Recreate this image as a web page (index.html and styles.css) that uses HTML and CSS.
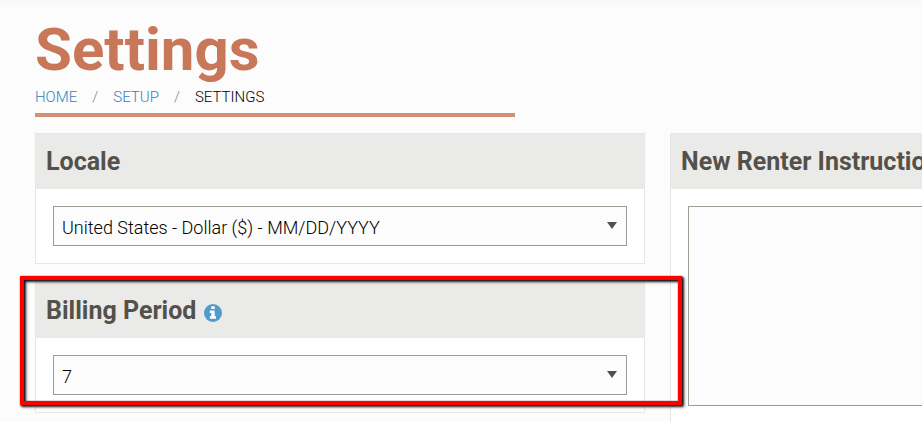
FILE: index.html
```html
<!DOCTYPE html>
<html lang="en">
  <head>
    <meta charset="UTF-8" />
    <meta name="viewport" content="width=device-width, initial-scale=1.0" />
    <title>Settings</title>
    <link rel="stylesheet" href="styles.css">
  </head>
  <body>
    <header class="page-header">
      <h1>Settings</h1>
      <nav class="breadcrumbs" aria-label="Breadcrumb">
        <a href="#">Home</a>
        <span class="separator">/</span>
        <a href="#">Setup</a>
        <span class="separator">/</span>
        <span>Settings</span>
      </nav>
    </header>

    <main class="columns">
      <div class="column">
        <section class="card">
          <h2><label for="locale">Locale</label></h2>
          <div class="card-body">
            <div class="select-wrap">
              <select id="locale">
                <option>United States - Dollar ($) - MM/DD/YYYY</option>
              </select>
            </div>
          </div>
        </section>

        <section class="card highlighted">
          <h2>
            <label for="billing-period">Billing Period</label>
            <svg class="info-icon" viewBox="0 0 18 18" role="img" aria-label="Info">
              <circle cx="9" cy="9" r="9" />
              <path d="M7.3 2.2h3.4v2.7H7.3zM5.8 6.5h4.9v5.8H12v2.4H5.8v-2.4h1.5V8.9H5.8z" />
            </svg>
          </h2>
          <div class="card-body">
            <div class="select-wrap">
              <select id="billing-period">
                <option>7</option>
              </select>
            </div>
          </div>
        </section>
      </div>

      <div class="column">
        <section class="card tall">
          <h2><label for="instructions">New Renter Instructions</label></h2>
          <div class="card-body">
            <textarea id="instructions"></textarea>
          </div>
        </section>
      </div>
    </main>
  </body>
</html>
```

FILE: styles.css
```css
* {
  box-sizing: border-box;
}

body {
  font-family: Roboto, "Liberation Sans", sans-serif;
  background: #fcfcfc linear-gradient(#f7f9f8, #fcfcfc 10px) no-repeat;
  color: #000;
  margin: 0;
  padding: 20px 35px 0;
  overflow: hidden;
}

.page-header {
  max-width: 480px;
  border-bottom: 4px solid #d38f77;
  margin-bottom: 16px;
}

h1 {
  margin: 0;
  font-size: 60px;
  line-height: 60px;
  font-weight: bold;
  color: #c87858;
}

.breadcrumbs {
  display: flex;
  gap: 15px;
  padding: 7px 0 6px;
  font-size: 15px;
  line-height: 20px;
  font-weight: 300;
  text-transform: uppercase;
}

.breadcrumbs a {
  color: #2f84bd;
  text-decoration: none;
}

.separator {
  color: #8a857c;
}

.columns {
  display: grid;
  grid-template-columns: 610px 610px;
  gap: 25px;
}

.column {
  display: flex;
  flex-direction: column;
  gap: 18px;
}

.card {
  position: relative;
  background-color: #fff;
  border: 1px solid #e6e6e6;
}

.tall {
  padding-bottom: 40px;
}

h2 {
  display: flex;
  align-items: center;
  gap: 8px;
  margin: 0;
  padding: 13px 10px 12px;
  background-color: #eaeae8;
  color: #54514a;
  font-size: 25px;
  line-height: 30px;
  font-weight: bold;
}

.card-body {
  padding: 17px;
}

.select-wrap {
  position: relative;
}

/* drop-down arrow */
.select-wrap::after {
  content: "";
  position: absolute;
  right: 10px;
  top: 16px;
  border: 5px solid transparent;
  border-top: 7px solid #54514a;
  border-bottom: 0;
  pointer-events: none;
}

select,
textarea {
  display: block;
  width: 100%;
  border: 1px solid #a09c94;
  border-radius: 0;
  background-color: #fcfcfc;
  color: #000;
  font-family: inherit;
  font-size: 18px;
  font-weight: 300;
}

select {
  appearance: none;
  height: 40px;
  padding: 2px 8px 0;
}

textarea {
  height: 200px;
  padding: 8px;
  resize: none;
}

.info-icon {
  width: 18px;
  height: 18px;
  margin-top: 3px;
}

.info-icon circle {
  fill: #519bcb;
}

.info-icon path {
  fill: #fff;
}

/* red frame around the billing card */
.highlighted {
  z-index: 1;
}

.highlighted::after {
  content: "";
  position: absolute;
  top: -7px;
  right: -38px;
  bottom: 7px;
  left: -16px;
  border: 4px solid #f00;
  filter: drop-shadow(1px 1px 1px #000) drop-shadow(1px 1px 1px #555);
  pointer-events: none;
}
```
